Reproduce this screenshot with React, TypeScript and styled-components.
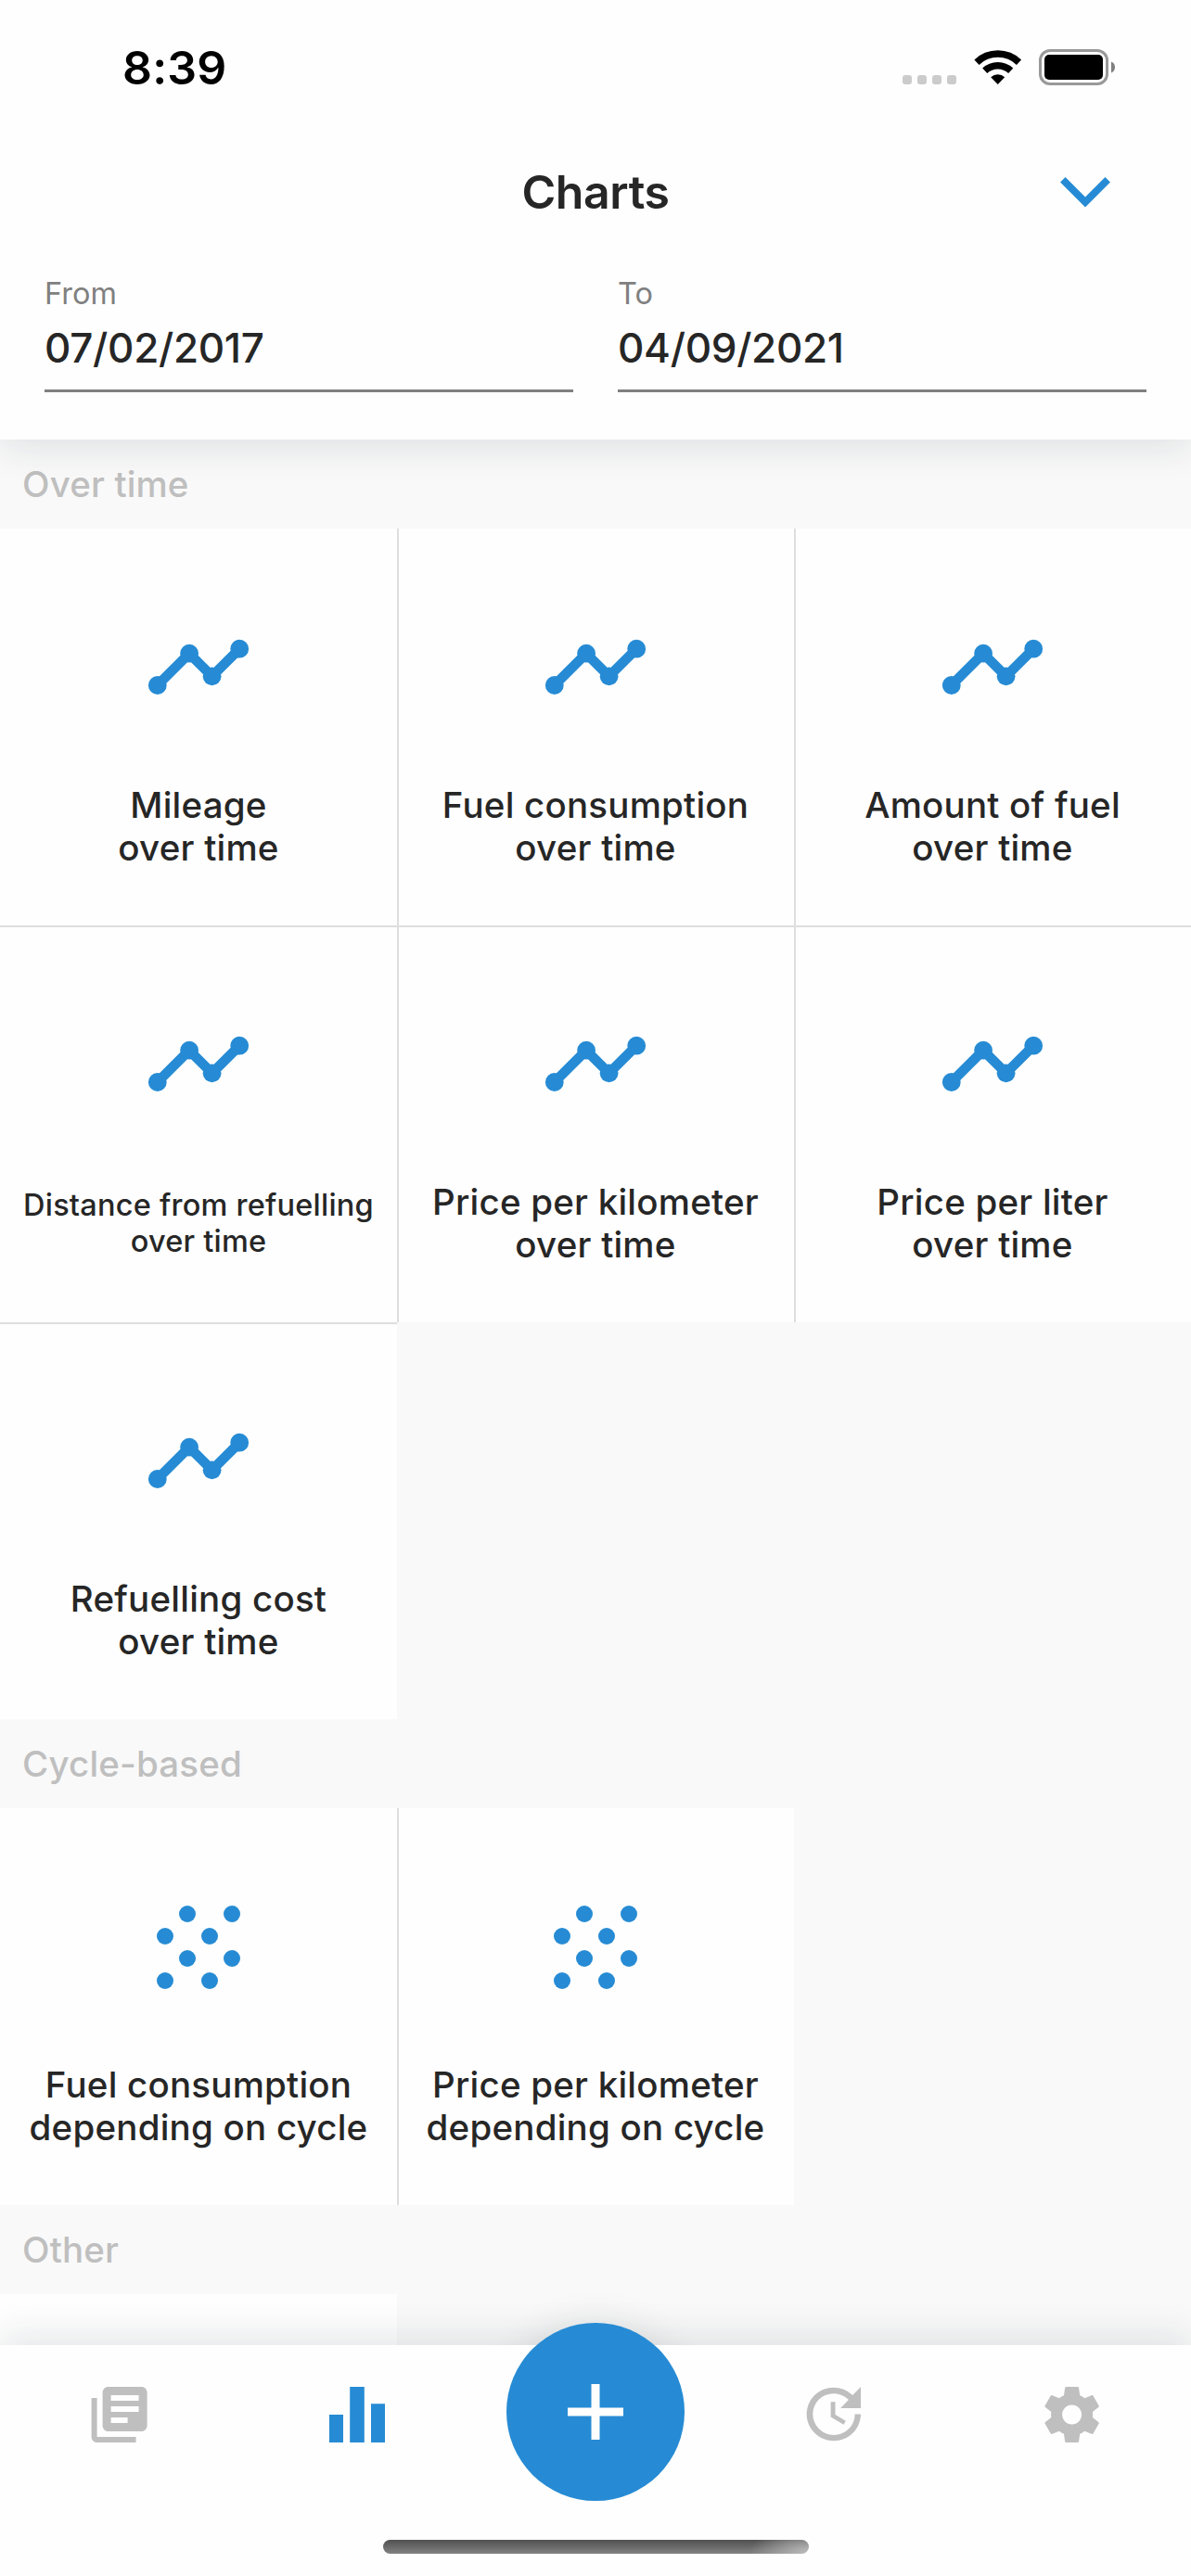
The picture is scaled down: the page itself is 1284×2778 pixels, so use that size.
import React from "react";
import styled, { createGlobalStyle } from "styled-components";

const BLUE = "#268bd4";
const GREY = "#bfbfbf";

const GlobalStyle = createGlobalStyle`
  * { box-sizing: border-box; }
  body { margin: 0; background: #f9f9f9; }
`;

const Screen = styled.div`
  display: flex;
  flex-direction: column;
  width: 1284px;
  height: 2778px;
  overflow: hidden;
  background: #f9f9f9;
  color: #262626;
  font-family: Inter, "Liberation Sans", sans-serif;
`;

const Header = styled.header`
  position: relative;
  z-index: 1;
  flex: none;
  height: 474px;
  background: #fefefe;
  box-shadow: 0 12px 36px rgba(20, 36, 50, 0.1);
`;

const StatusBar = styled.div`
  display: flex;
  align-items: center;
  justify-content: space-between;
  height: 146px;
  padding: 0 82px 0 132px;
`;

const Clock = styled.span`
  color: #000;
  font-size: 50px;
  font-weight: 600;
  line-height: 60px;
  letter-spacing: 0.2px;
`;

const TitleBar = styled.div`
  display: grid;
  grid-template-columns: 1fr auto 1fr;
  align-items: center;
  height: 122px;
  padding: 0 84px;
`;

const Title = styled.h1`
  grid-column: 2;
  margin: 0;
  font-size: 50px;
  font-weight: 600;
  line-height: 60px;
  letter-spacing: -0.4px;
`;

const Toggle = styled.button`
  display: flex;
  justify-self: end;
  padding: 0;
  border: 0;
  background: none;
`;

const DateRange = styled.div`
  display: grid;
  grid-template-columns: 1fr 1fr;
  gap: 48px;
  padding: 24px 48px 0;
`;

const Field = styled.label`
  display: flex;
  flex-direction: column;
  height: 131px;
  border-bottom: 3px solid #808080;
`;

const FieldLabel = styled.span`
  color: #808080;
  font-size: 32.5px;
  line-height: 49px;
`;

const FieldValue = styled.span`
  padding-top: 7px;
  font-size: 44px;
  font-weight: 500;
  line-height: 54px;
  letter-spacing: -0.3px;
`;

const Content = styled.main`
  flex: 1;
  min-height: 0;
  overflow: hidden;
`;

const SectionTitle = styled.h2`
  height: 96px;
  margin: 0;
  padding: 0 24px;
  color: ${GREY};
  font-size: 38.5px;
  font-weight: 500;
  line-height: 96px;
  letter-spacing: 0.15px;
`;

const Grid = styled.div`
  display: grid;
  grid-template-columns: repeat(3, 428px);
  grid-auto-rows: 428px;
`;

const Card = styled.div<{ $left: boolean; $top: boolean }>`
  display: flex;
  flex-direction: column;
  align-items: center;
  padding: 90px 0 0;
  background: #fefefe;
  box-shadow: ${(p) => [p.$left && "inset 2px 0 #dedede", p.$top && "inset 0 2px #dedede"].filter(Boolean).join(", ") || "none"};
`;

const CardLabel = styled.div<{ $small?: boolean }>`
  display: flex;
  flex-direction: column;
  justify-content: center;
  height: 92px;
  margin-top: 41px;
  text-align: center;
  white-space: nowrap;
  font-size: ${(p) => (p.$small ? 32.5 : 38.5)}px;
  font-weight: 500;
  line-height: ${(p) => (p.$small ? 39 : 46)}px;
  letter-spacing: 0.22px;
`;

const TabBar = styled.nav`
  position: relative;
  z-index: 1;
  display: flex;
  flex-direction: column;
  align-items: center;
  flex: none;
  height: 249px;
  background: #fefefe;
  box-shadow: 0 -12px 36px rgba(20, 36, 50, 0.1);
`;

const Tabs = styled.div`
  display: grid;
  grid-template-columns: repeat(5, 1fr);
  justify-items: center;
  width: 100%;
  height: 210px;
  padding-top: 39px;
`;

const AddButton = styled.button`
  position: relative;
  display: flex;
  align-items: center;
  justify-content: center;
  width: 192px;
  height: 192px;
  margin-top: -63px;
  padding: 0;
  border: 0;
  border-radius: 50%;
  background: ${BLUE};

  /* The glow is cut off at the top edge of the tab bar. */
  &::before {
    content: "";
    position: absolute;
    inset: 0;
    border-radius: 50%;
    box-shadow: 0 0 42px rgba(20, 36, 50, 0.1);
    clip-path: inset(-80px -80px 168px -80px);
  }
`;

const HomeIndicator = styled.div`
  width: 459px;
  height: 15px;
  border-radius: 8px;
  background: radial-gradient(64px 32px at 100% 100%, rgba(200, 200, 200, 0.85), transparent),
    linear-gradient(#505050, #828282);
`;

const LineChartIcon = () => (
  <svg width="144" height="144" viewBox="0 0 144 144" fill={BLUE}>
    <path d="M27.700 79 62 44.700 86.600 69.300 116.200 39.700" fill="none" stroke={BLUE} strokeWidth="10.600" />
    <circle cx="27.800" cy="79" r="9.900" />
    <circle cx="62.100" cy="44.700" r="9.900" />
    <circle cx="86.600" cy="69.300" r="9.900" />
    <circle cx="116.200" cy="39.700" r="9.900" />
  </svg>
);

const ScatterIcon = () => (
  <svg width="144" height="144" viewBox="0 0 144 144" fill={BLUE}>
    {[[60, 24], [108, 24], [36, 48], [84, 48], [60, 72], [108, 72], [36, 96], [84, 96]].map(([x, y]) => (
      <circle key={`${x}-${y}`} cx={x} cy={y} r="9" />
    ))}
  </svg>
);

const StatusIcons = () => (
  <svg width="230" height="40" viewBox="0 0 230 40">
    <g fill="#cbcbcb">
      {[0, 16, 32, 48].map((x) => (
        <rect key={x} x={x + 1} y="28" width="10" height="10" rx="3" />
      ))}
    </g>
    <g fill="none" stroke="#000" strokeWidth="7.500">
      <path d="M81 14.200a33 33 0 0 1 45.500 0" />
      <path d="M89.700 23.200a20.500 20.500 0 0 1 28 0" />
    </g>
    <path d="M103.700 38l-7.500-7.800a10.800 10.800 0 0 1 15 0z" />
    <rect x="149.500" y="1.500" width="72" height="36" rx="10.500" fill="none" stroke="#999" strokeWidth="3" />
    <rect x="154" y="6" width="63" height="27" rx="5" />
    <path d="M226 13.500a6.500 6.500 0 0 1 0 12z" fill="#808080" />
  </svg>
);

const ICONS = {
  logs: "M4 6H2v14c0 1.100.9 2 2 2h14v-2H4V6zm16-4H8c-1.100 0-2 .9-2 2v12c0 1.100.9 2 2 2h12c1.100 0 2-.9 2-2V4c0-1.100-.9-2-2-2zm-1 9H9V9h10v2zm-4 4H9v-2h6v2zm4-8H9V5h10v2z",
  charts: "M2 12h5v10H2zM9.400 2h5.200v20H9.400zM17 8.100h5V22h-5z",
  update: "M21 10.120h-6.780l2.740-2.820c-2.730-2.700-7.150-2.800-9.880-.1-2.730 2.710-2.730 7.080 0 9.790s7.150 2.710 9.880 0C18.320 15.650 19 14.080 19 12.100h2c0 1.980-.88 4.550-2.640 6.290-3.510 3.480-9.210 3.480-12.720 0-3.500-3.470-3.530-9.110-.02-12.580s9.140-3.470 12.650 0L21 3v7.120zM12.500 8v4.250l3.500 2.080-.72 1.210L11 13V8h1.500z",
  settings: "M19.430 12.980c.04-.32.07-.64.07-.98s-.03-.66-.07-.98l2.110-1.650c.19-.15.24-.42.12-.64l-2-3.460c-.12-.22-.39-.3-.61-.22l-2.490 1c-.52-.4-1.080-.73-1.690-.98l-.38-2.650C14.460 2.180 14.250 2 14 2h-4c-.25 0-.46.18-.49.42l-.38 2.650c-.61.25-1.170.59-1.690.98l-2.490-1c-.23-.09-.49 0-.61.22l-2 3.460c-.13.22-.07.49.12.64l2.110 1.650c-.04.32-.07.65-.07.98s.03.66.07.98l-2.110 1.650c-.19.15-.24.42-.12.64l2 3.460c.12.22.39.3.61.22l2.490-1c.52.4 1.080.73 1.690.98l.38 2.650c.03.24.24.42.49.42h4c.25 0 .46-.18.49-.42l.38-2.650c.61-.25 1.170-.59 1.690-.98l2.490 1c.23.09.49 0 .61-.22l2-3.460c.12-.22.07-.49-.12-.64l-2.110-1.650zM12 15.500c-1.930 0-3.500-1.570-3.500-3.500s1.570-3.500 3.500-3.500 3.500 1.570 3.500 3.500-1.570 3.500-3.500 3.500z",
};

type TabIconProps = { name: keyof typeof ICONS; active?: boolean; viewBox?: string };

const TabIcon = ({ name, active, viewBox = "0 0 24 24" }: TabIconProps) => (
  <svg width="72" height="72" viewBox={viewBox} fill={active ? BLUE : GREY}>
    <path d={ICONS[name]} />
  </svg>
);

type Chart = { name: string; detail: string; small?: boolean };
type Section = { title: string; kind: "line" | "scatter"; charts: Chart[] };

const sections: Section[] = [
  {
    title: "Over time",
    kind: "line",
    charts: [
      { name: "Mileage", detail: "over time" },
      { name: "Fuel consumption", detail: "over time" },
      { name: "Amount of fuel", detail: "over time" },
      { name: "Distance from refuelling", detail: "over time", small: true },
      { name: "Price per kilometer", detail: "over time" },
      { name: "Price per liter", detail: "over time" },
      { name: "Refuelling cost", detail: "over time" },
    ],
  },
  {
    title: "Cycle-based",
    kind: "scatter",
    charts: [
      { name: "Fuel consumption", detail: "depending on cycle" },
      { name: "Price per kilometer", detail: "depending on cycle" },
    ],
  },
];

export default function App() {
  return (
    <Screen>
      <GlobalStyle />
      <Header>
        <StatusBar>
          <Clock>8:39</Clock>
          <StatusIcons />
        </StatusBar>
        <TitleBar>
          <Title>Charts</Title>
          <Toggle aria-label="Show filters">
            <svg width="60" height="40" viewBox="0 0 60 40">
              <path d="M5.800 6.700 30 30.900 54.200 6.700" fill="none" stroke={BLUE} strokeWidth="7.800" />
            </svg>
          </Toggle>
        </TitleBar>
        <DateRange>
          <Field>
            <FieldLabel>From</FieldLabel>
            <FieldValue>07/02/2017</FieldValue>
          </Field>
          <Field>
            <FieldLabel>To</FieldLabel>
            <FieldValue>04/09/2021</FieldValue>
          </Field>
        </DateRange>
      </Header>
      <Content>
        {sections.map((section) => (
          <section key={section.title}>
            <SectionTitle>{section.title}</SectionTitle>
            <Grid>
              {section.charts.map((chart, i) => (
                <Card key={chart.name} $left={i % 3 > 0} $top={i >= 3}>
                  {section.kind === "line" ? <LineChartIcon /> : <ScatterIcon />}
                  <CardLabel $small={chart.small}>
                    <span>{chart.name}</span>
                    <span>{chart.detail}</span>
                  </CardLabel>
                </Card>
              ))}
            </Grid>
          </section>
        ))}
        <SectionTitle>Other</SectionTitle>
        <Grid>
          <Card $left={false} $top={false} />
        </Grid>
      </Content>
      <TabBar>
        <Tabs>
          <TabIcon name="logs" viewBox="-0.2 0 24 24" />
          <TabIcon name="charts" active />
          <AddButton aria-label="Add">
            <svg width="60" height="60" viewBox="0 0 60 60">
              <path d="M30 0v60M0 30h60" stroke="#fefefe" strokeWidth="9" />
            </svg>
          </AddButton>
          <TabIcon name="update" viewBox="0.93 1.15 22.22 22.22" />
          <TabIcon name="settings" viewBox="0.130 0 24 24" />
        </Tabs>
        <HomeIndicator />
      </TabBar>
    </Screen>
  );
}
